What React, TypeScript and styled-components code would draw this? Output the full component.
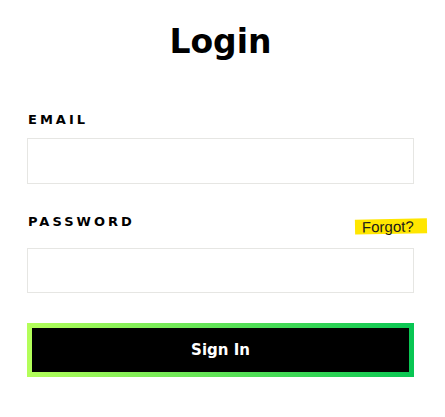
import styled, { createGlobalStyle } from 'styled-components';

const GlobalStyles = createGlobalStyle`
  * {
    margin: 0;
    padding: 0;
    box-sizing: border-box;
  }

  body {
    background-color: #ffffff;
    color: #000000;
    font-family: "DejaVu Sans", sans-serif;
  }
`;

const Page = styled.main`
  width: 445px;
  padding: 22px 31px 0 27px;
`;

const Title = styled.h1`
  font-size: 33px;
  line-height: 40px;
  font-weight: 700;
  text-align: center;
  margin-bottom: 46px;
`;

const Form = styled.form`
  display: flex;
  flex-direction: column;
`;

const Field = styled.div<{ $gap: number }>`
  display: flex;
  flex-direction: column;
  margin-bottom: ${({ $gap }) => $gap}px;
`;

const LabelRow = styled.div<{ $space: number }>`
  display: flex;
  align-items: flex-end;
  justify-content: space-between;
  height: 20px;
  margin-bottom: ${({ $space }) => $space}px;
`;

const Label = styled.label`
  font-size: 13px;
  line-height: 16px;
  font-weight: 700;
  letter-spacing: 3px;
  padding-left: 1px;
`;

const Forgot = styled.a`
  font-family: "Liberation Sans", Arial, sans-serif;
  font-size: 15px;
  line-height: 15px;
  color: #1a1a1a;
  background: #ffe600;
  padding: 0 13px 0 7px;
  margin-right: -13px;
  margin-bottom: -4px;
  transform: rotate(-1deg);
  text-decoration: none;
`;

const Input = styled.input<{ $h: number }>`
  height: ${({ $h }) => $h}px;
  width: 100%;
  border: 1px solid #e6e6e3;
  background: #ffffff;
  outline: none;
`;

const SubmitButton = styled.button`
  height: 54px;
  width: 100%;
  border: 5px solid transparent;
  background:
    linear-gradient(#000, #000) padding-box,
    linear-gradient(90deg, #b4fe5a, #08c653) border-box;
  color: #ffffff;
  font-family: "DejaVu Sans", sans-serif;
  font-size: 15px;
  font-weight: 700;
  cursor: pointer;
`;

export default function App() {
  return (
    <>
      <GlobalStyles />
      <Page>
        <Title>Login</Title>
        <Form onSubmit={(e) => e.preventDefault()}>
          <Field $gap={26}>
            <LabelRow $space={10}>
              <Label>EMAIL</Label>
            </LabelRow>
            <Input type="email" $h={46} />
          </Field>
          <Field $gap={30}>
            <LabelRow $space={18}>
              <Label>PASSWORD</Label>
              <Forgot href="#">Forgot?</Forgot>
            </LabelRow>
            <Input type="password" $h={45} />
          </Field>
          <SubmitButton type="submit">Sign In</SubmitButton>
        </Form>
      </Page>
    </>
  );
}
